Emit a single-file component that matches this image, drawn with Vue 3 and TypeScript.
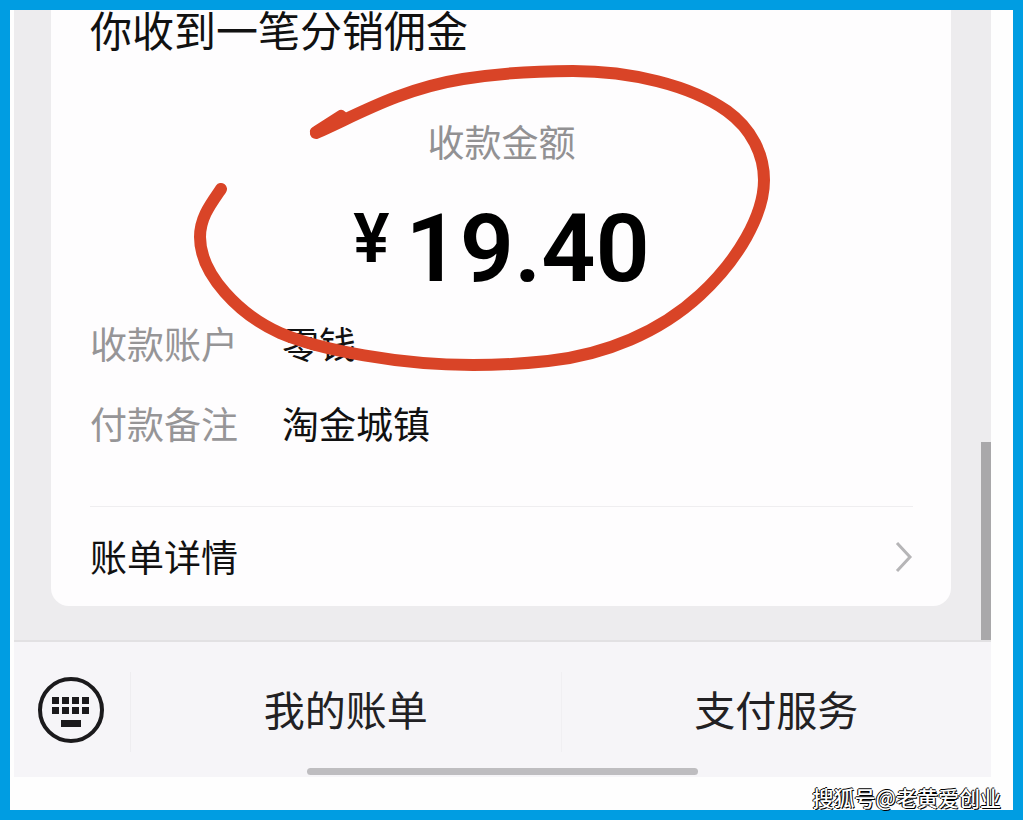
<script setup lang="ts">
interface Detail {
  label: string
  value: string
}

const details: Detail[] = [
  { label: '收款账户', value: '零钱' },
  { label: '付款备注', value: '淘金城镇' },
]

const menus: string[] = ['我的账单', '支付服务']
</script>

<template>
  <div class="frame">
    <div class="screen">
      <main class="chat">
        <article class="card">
          <h1 class="title">你收到一笔分销佣金</h1>
          <section class="summary">
            <p class="caption">收款金额</p>
            <p class="amount"><span class="currency">¥</span><span>19.40</span></p>
            <svg class="loop" viewBox="0 0 584 330" aria-hidden="true">
              <path d="M126 83C165 66 210 39 273 29C310 23 345 21 383 21C440 21 500 35 537 61C562 79 574 105 574 130C574 165 548 210 510 245C470 282 415 305 358 311C330 314 305 315 283 315C210 315 130 300 90 283C50 265 10 225 10 187C10 168 20 155 31 139" />
              <path d="M126 82L151 66L154 69Z" />
            </svg>
          </section>
          <dl class="details">
            <div v-for="item in details" :key="item.label" class="detail">
              <dt>{{ item.label }}</dt>
              <dd>{{ item.value }}</dd>
            </div>
          </dl>
          <a class="more" href="#">
            <span>账单详情</span>
            <svg class="chevron" viewBox="0 0 18 32" aria-hidden="true">
              <path d="M2 2L15 16L2 30" />
            </svg>
          </a>
        </article>
        <div class="thumb"></div>
      </main>
      <footer class="bar">
        <div class="menus">
          <button class="keyboard" type="button" aria-label="键盘">
            <svg viewBox="0 0 68 68" aria-hidden="true">
              <circle cx="34" cy="34" r="31" />
              <path d="M15 21h7v7h-7zM25 21h7v7h-7zM35 21h7v7h-7zM45 21h7v7h-7zM15 31h7v7h-7zM25 31h7v7h-7zM35 31h7v7h-7zM45 31h7v7h-7zM24 44h20v7h-20z" />
            </svg>
          </button>
          <button v-for="name in menus" :key="name" class="menu" type="button">{{ name }}</button>
        </div>
        <div class="home"></div>
      </footer>
    </div>
    <p class="credit">搜狐号@老黄爱创业</p>
  </div>
</template>

<style>
body {
  margin: 0;
}
</style>

<style scoped>
.frame {
  position: relative;
  box-sizing: border-box;
  min-height: 100vh;
  padding: 0 22px 32px 4px;
  border: 10px solid #009de2;
  background: #fefefe;
  color: #111;
  font-family: "Noto Sans CJK SC", sans-serif;
}

h1,
p,
dl,
dd {
  margin: 0;
}

button {
  padding: 0;
  border: 0;
  background: none;
  color: inherit;
  font: inherit;
}

.chat {
  position: relative;
  padding: 0 40px 34px 37px;
  background: #edecee;
}

.card {
  padding: 0 38px 0 39px;
  border-radius: 0 0 18px 18px;
  background: #fefdfe;
}

.title {
  font-size: 42px;
  font-weight: 400;
  line-height: 38px;
}

.summary {
  position: relative;
  padding-top: 71px;
  text-align: center;
}

.caption {
  color: #929193;
  font-size: 37px;
  line-height: 44px;
}

.amount {
  display: flex;
  justify-content: center;
  gap: 16px;
  margin-top: 36px;
  color: #000;
  font-family: Roboto, sans-serif;
  font-size: 95px;
  font-weight: 600;
  line-height: 100px;
}

.currency {
  font-size: 68px;
  line-height: 80px;
}

.loop {
  position: absolute;
  top: 2px;
  left: calc(50% - 312px);
  width: 584px;
  height: 330px;
  fill: none;
  stroke: #d94427;
  stroke-width: 12px;
  stroke-linecap: round;
  stroke-linejoin: round;
  pointer-events: none;
}

.details {
  display: grid;
  gap: 36px;
  padding: 22px 0 61px;
  font-size: 37px;
  line-height: 44px;
}

.detail {
  display: flex;
  gap: 44px;
}

.detail dt {
  color: #969597;
}

.more {
  display: flex;
  align-items: center;
  justify-content: space-between;
  border-top: 1px solid #efeef0;
  color: inherit;
  font-size: 37px;
  line-height: 99px;
  text-decoration: none;
}

.chevron {
  width: 18px;
  height: 32px;
  fill: none;
  stroke: #b6b5b7;
  stroke-width: 3px;
}

.thumb {
  position: absolute;
  right: 0;
  bottom: 0;
  width: 10px;
  height: 198px;
  background: #a9a8aa;
}

.bar {
  padding-bottom: 2px;
  border-top: 2px solid #e2e1e3;
  background: #f6f5f8;
}

.menus {
  display: flex;
  align-items: center;
  padding-top: 30px;
}

.keyboard {
  box-sizing: border-box;
  width: 117px;
  height: 80px;
  padding: 0 26px 4px 23px;
  border-right: 1px solid #eeedf0;
}

.keyboard svg {
  display: block;
  width: 68px;
  height: 68px;
}

.keyboard circle {
  fill: none;
  stroke: #1b1a1c;
  stroke-width: 4px;
}

.keyboard path {
  fill: #1b1a1c;
}

.menu {
  box-sizing: border-box;
  flex: 1;
  height: 80px;
  padding-bottom: 8px;
  color: #222123;
  font-size: 41px;
  line-height: 72px;
}

.menu + .menu {
  border-left: 1px solid #f0eff2;
}

.home {
  width: 40%;
  height: 7px;
  margin: 16px auto 0;
  border-radius: 4px;
  background: #bebdc0;
}

.credit {
  position: absolute;
  right: 12px;
  bottom: 1px;
  color: #fff;
  font-size: 21px;
  font-weight: 500;
  line-height: 24px;
  text-shadow: 1px 1px 0 #000, -1px 0 0 #000, 0 -1px 0 #000;
}
</style>
